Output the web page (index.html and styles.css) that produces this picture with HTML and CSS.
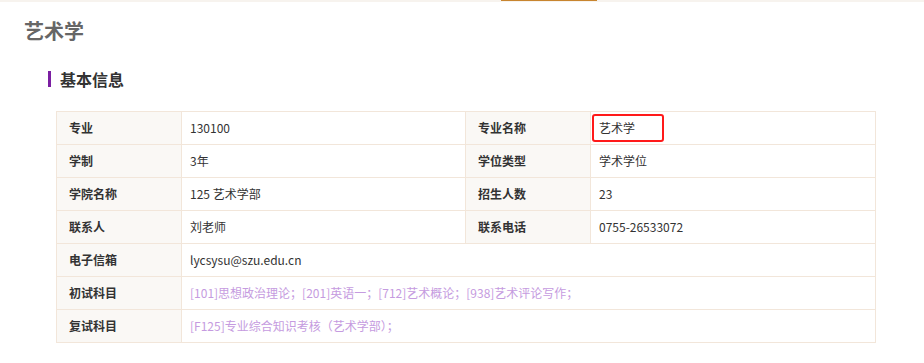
FILE: index.html
```html
<!DOCTYPE html>
<html lang="zh-CN">
<head>
    <meta charset="UTF-8">
    <meta name="viewport" content="width=device-width, initial-scale=1.0">
    <title>艺术学</title>
    <link rel="stylesheet" href="styles.css">
</head>
<body>
    <div class="top-bar">
        <span class="top-bar-active"></span>
    </div>

    <div class="major">
        <h1 class="major-title">艺术学</h1>

        <h2 class="section-title">基本信息</h2>

        <table class="info-table">
            <colgroup>
                <col class="col-label">
                <col class="col-value">
                <col class="col-label">
                <col>
            </colgroup>
            <tbody>
                <tr>
                    <th>专业</th>
                    <td>130100</td>
                    <th>专业名称</th>
                    <td class="marked"><span class="mark-box"></span>艺术学</td>
                </tr>
                <tr>
                    <th>学制</th>
                    <td>3年</td>
                    <th>学位类型</th>
                    <td>学术学位</td>
                </tr>
                <tr>
                    <th>学院名称</th>
                    <td>125 艺术学部</td>
                    <th>招生人数</th>
                    <td>23</td>
                </tr>
                <tr>
                    <th>联系人</th>
                    <td>刘老师</td>
                    <th>联系电话</th>
                    <td>0755-26533072</td>
                </tr>
                <tr>
                    <th>电子信箱</th>
                    <td colspan="3">lycsysu@szu.edu.cn</td>
                </tr>
                <tr>
                    <th>初试科目</th>
                    <td colspan="3" class="subjects">[101]思想政治理论；[201]英语一；[712]艺术概论；[938]艺术评论写作；</td>
                </tr>
                <tr>
                    <th>复试科目</th>
                    <td colspan="3" class="subjects">[F125]专业综合知识考核（艺术学部）；</td>
                </tr>
            </tbody>
        </table>
    </div>
</body>
</html>
```

FILE: styles.css
```css
body {
    margin: 0;
    font-family: "Noto Sans CJK SC", "Liberation Sans", sans-serif;
    color: #333;
    background: #fff;
}

.top-bar {
    height: 2px;
    background: #f7f3ee;
}

.top-bar-active {
    display: block;
    margin-left: 501px;
    width: 96px;
    height: 1px;
    background: #c8852f;
}

.major {
    padding: 0 24px;
}

.major-title {
    margin: 14px 0 0;
    font-size: 20px;
    line-height: 30px;
    font-weight: bold;
    color: #666;
}

.section-title {
    margin: 25px 0 0 24px;
    padding-left: 9px;
    border-left: 3px solid #7b1fa2;
    font-size: 16px;
    line-height: 16px;
    font-weight: bold;
    color: #333;
}

.info-table {
    margin: 24px 0 0 32px;
    width: 820px;
    border-collapse: collapse;
    table-layout: fixed;
    font-size: 12px;
}

.col-label {
    width: 125px;
}

.col-value {
    width: 284px;
}

.info-table th,
.info-table td {
    height: 33px;
    padding: 0 8px;
    border: 1px solid #f2e6da;
    text-align: left;
    line-height: 20px;
    box-sizing: border-box;
}

.info-table th {
    padding-left: 12px;
    background: #faf8f5;
    font-weight: bold;
    color: #333;
}

.info-table td {
    color: #333;
}

.info-table .subjects {
    color: #c59be0;
}

.marked {
    position: relative;
}

/* red outline drawn over the major name */
.mark-box {
    position: absolute;
    left: 1px;
    top: 2px;
    width: 72px;
    height: 28px;
    border: 2px solid #ff1a1a;
    border-radius: 3px;
    box-sizing: border-box;
}
```
